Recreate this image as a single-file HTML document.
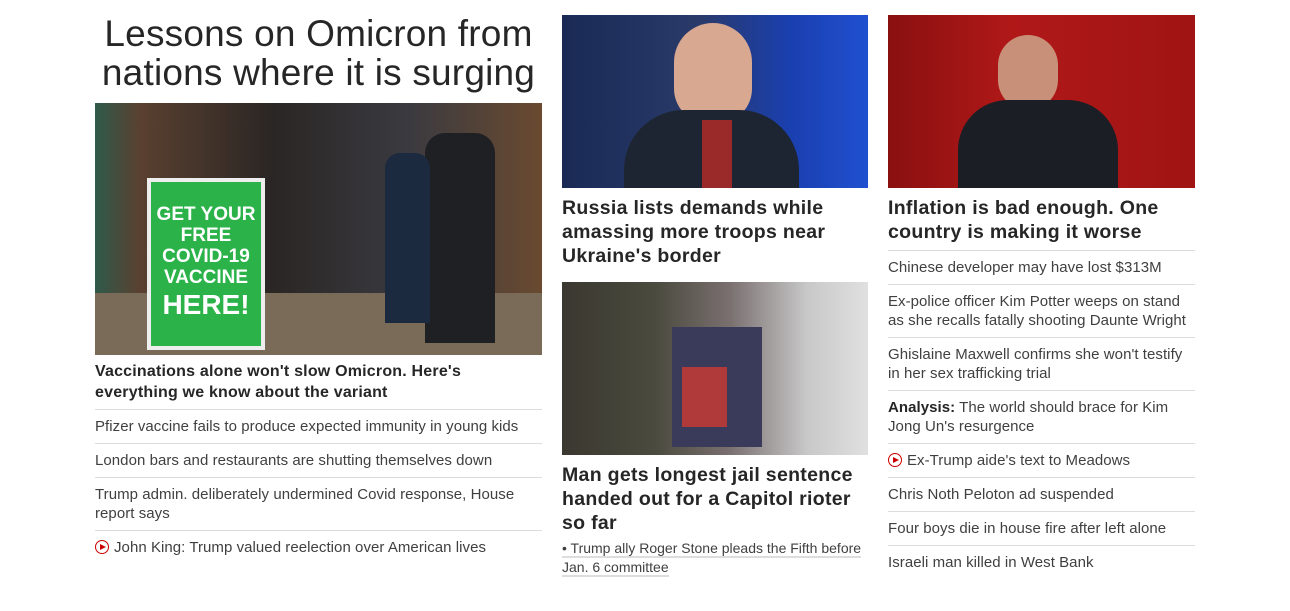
<!DOCTYPE html>
<html><head><meta charset="utf-8"><style>
body{margin:0;width:1290px;height:611px;background:#fff;font-family:"Liberation Sans",Arial,sans-serif;color:#262626;position:relative;overflow:hidden}
.a{position:absolute}
.h1{left:90px;top:14px;width:457px;text-align:center;font-size:37px;line-height:39px;color:#262626;letter-spacing:0.2px}
.bh{font-weight:bold;font-size:19.5px;line-height:24px;letter-spacing:0.3px}
.sh{font-weight:bold;font-size:16px;line-height:21px;letter-spacing:0.2px}
.list{font-size:15px;line-height:19px;color:#404040;letter-spacing:0.05px}
.list div{border-top:1px solid #dcdcdc;padding:7px 0 7px}
.play{display:inline-block;width:12px;height:12px;border:1.5px solid #cc0000;border-radius:50%;position:relative;vertical-align:-2px;margin-right:5px}
.play:after{content:"";position:absolute;left:4px;top:2.5px;border-left:6px solid #cc0000;border-top:3.5px solid transparent;border-bottom:3.5px solid transparent}
</style></head><body>
<div class="a h1">Lessons on Omicron from nations where it is surging</div>
<div class="a" style="left:95px;top:103px;width:447px;height:252px;background:linear-gradient(90deg,#2f5a4a 0,#5a4030 10%,#2a2624 40%,#3a3a40 70%,#6a4a30 100%)">
 <div class="a" style="left:0;top:190px;width:447px;height:62px;background:#7a6a58"></div>
 <div class="a" style="left:52px;top:75px;width:118px;height:172px;background:#2bb34a;border:4px solid #eee;color:#fff;font-weight:bold;text-align:center;font-size:19px;line-height:21px;padding-top:22px;box-sizing:border-box">GET YOUR<br>FREE<br>COVID-19<br>VACCINE<br><span style="font-size:28px;line-height:34px">HERE!</span></div>
 <div class="a" style="left:330px;top:30px;width:70px;height:210px;background:#1e2024;border-radius:20px 20px 0 0"></div>
 <div class="a" style="left:290px;top:50px;width:45px;height:170px;background:#1b2a3e;border-radius:15px 15px 0 0"></div>
</div>
<div class="a sh" style="left:95px;top:361px;width:447px">Vaccinations alone won't slow Omicron. Here's everything we know about the variant</div>
<div class="a list" style="left:95px;top:409px;width:447px">
<div>Pfizer vaccine fails to produce expected immunity in young kids</div>
<div>London bars and restaurants are shutting themselves down</div>
<div>Trump admin. deliberately undermined Covid response, House report says</div>
<div><span class="play"></span>John King: Trump valued reelection over American lives</div>
</div>

<div class="a" style="left:562px;top:15px;width:306px;height:173px;background:linear-gradient(90deg,#1a2a55 0,#2a3a6a 45%,#1a3fb0 75%,#2050d0 100%)">
 <div class="a" style="left:112px;top:8px;width:78px;height:100px;background:#d8a890;border-radius:40px 40px 35px 35px"></div>
 <div class="a" style="left:62px;top:95px;width:175px;height:78px;background:#1d2432;border-radius:60px 60px 0 0"></div>
 <div class="a" style="left:140px;top:105px;width:30px;height:68px;background:#9a2a2a"></div>
</div>
<div class="a bh" style="left:562px;top:196px;width:310px">Russia lists demands while amassing more troops near Ukraine's border</div>
<div class="a" style="left:562px;top:282px;width:306px;height:173px;background:linear-gradient(90deg,#3a3830 0,#4a4a3e 30%,#7a7070 55%,#c8c8c8 80%,#e0e0e0 100%)">
 <div class="a" style="left:110px;top:45px;width:90px;height:120px;background:#3a3a5a"></div>
 <div class="a" style="left:120px;top:85px;width:45px;height:60px;background:#b03a3a"></div>
</div>
<div class="a bh" style="left:562px;top:463px;width:310px">Man gets longest jail sentence handed out for a Capitol rioter so far</div>
<div class="a" style="left:562px;top:539px;width:310px;font-size:14px;line-height:19px;color:#404040"><span style="border-bottom:2px solid #ddd">• Trump ally Roger Stone pleads the Fifth before</span><br><span style="border-bottom:2px solid #ddd">Jan. 6 committee</span></div>

<div class="a" style="left:888px;top:15px;width:307px;height:173px;background:linear-gradient(90deg,#8a1010 0,#b01818 40%,#a01414 100%)">
 <div class="a" style="left:110px;top:20px;width:60px;height:75px;background:#c89078;border-radius:30px"></div>
 <div class="a" style="left:70px;top:85px;width:160px;height:88px;background:#1c1e26;border-radius:50px 50px 0 0"></div>
</div>
<div class="a bh" style="left:888px;top:196px;width:310px">Inflation is bad enough. One country is making it worse</div>
<div class="a list" style="left:888px;top:250px;width:307px">
<div>Chinese developer may have lost $313M</div>
<div>Ex-police officer Kim Potter weeps on stand as she recalls fatally shooting Daunte Wright</div>
<div>Ghislaine Maxwell confirms she won't testify in her sex trafficking trial</div>
<div><b style="color:#262626">Analysis:</b> The world should brace for Kim Jong Un's resurgence</div>
<div><span class="play"></span>Ex-Trump aide's text to Meadows</div>
<div>Chris Noth Peloton ad suspended</div>
<div>Four boys die in house fire after left alone</div>
<div>Israeli man killed in West Bank</div>
</div>
</body></html>
